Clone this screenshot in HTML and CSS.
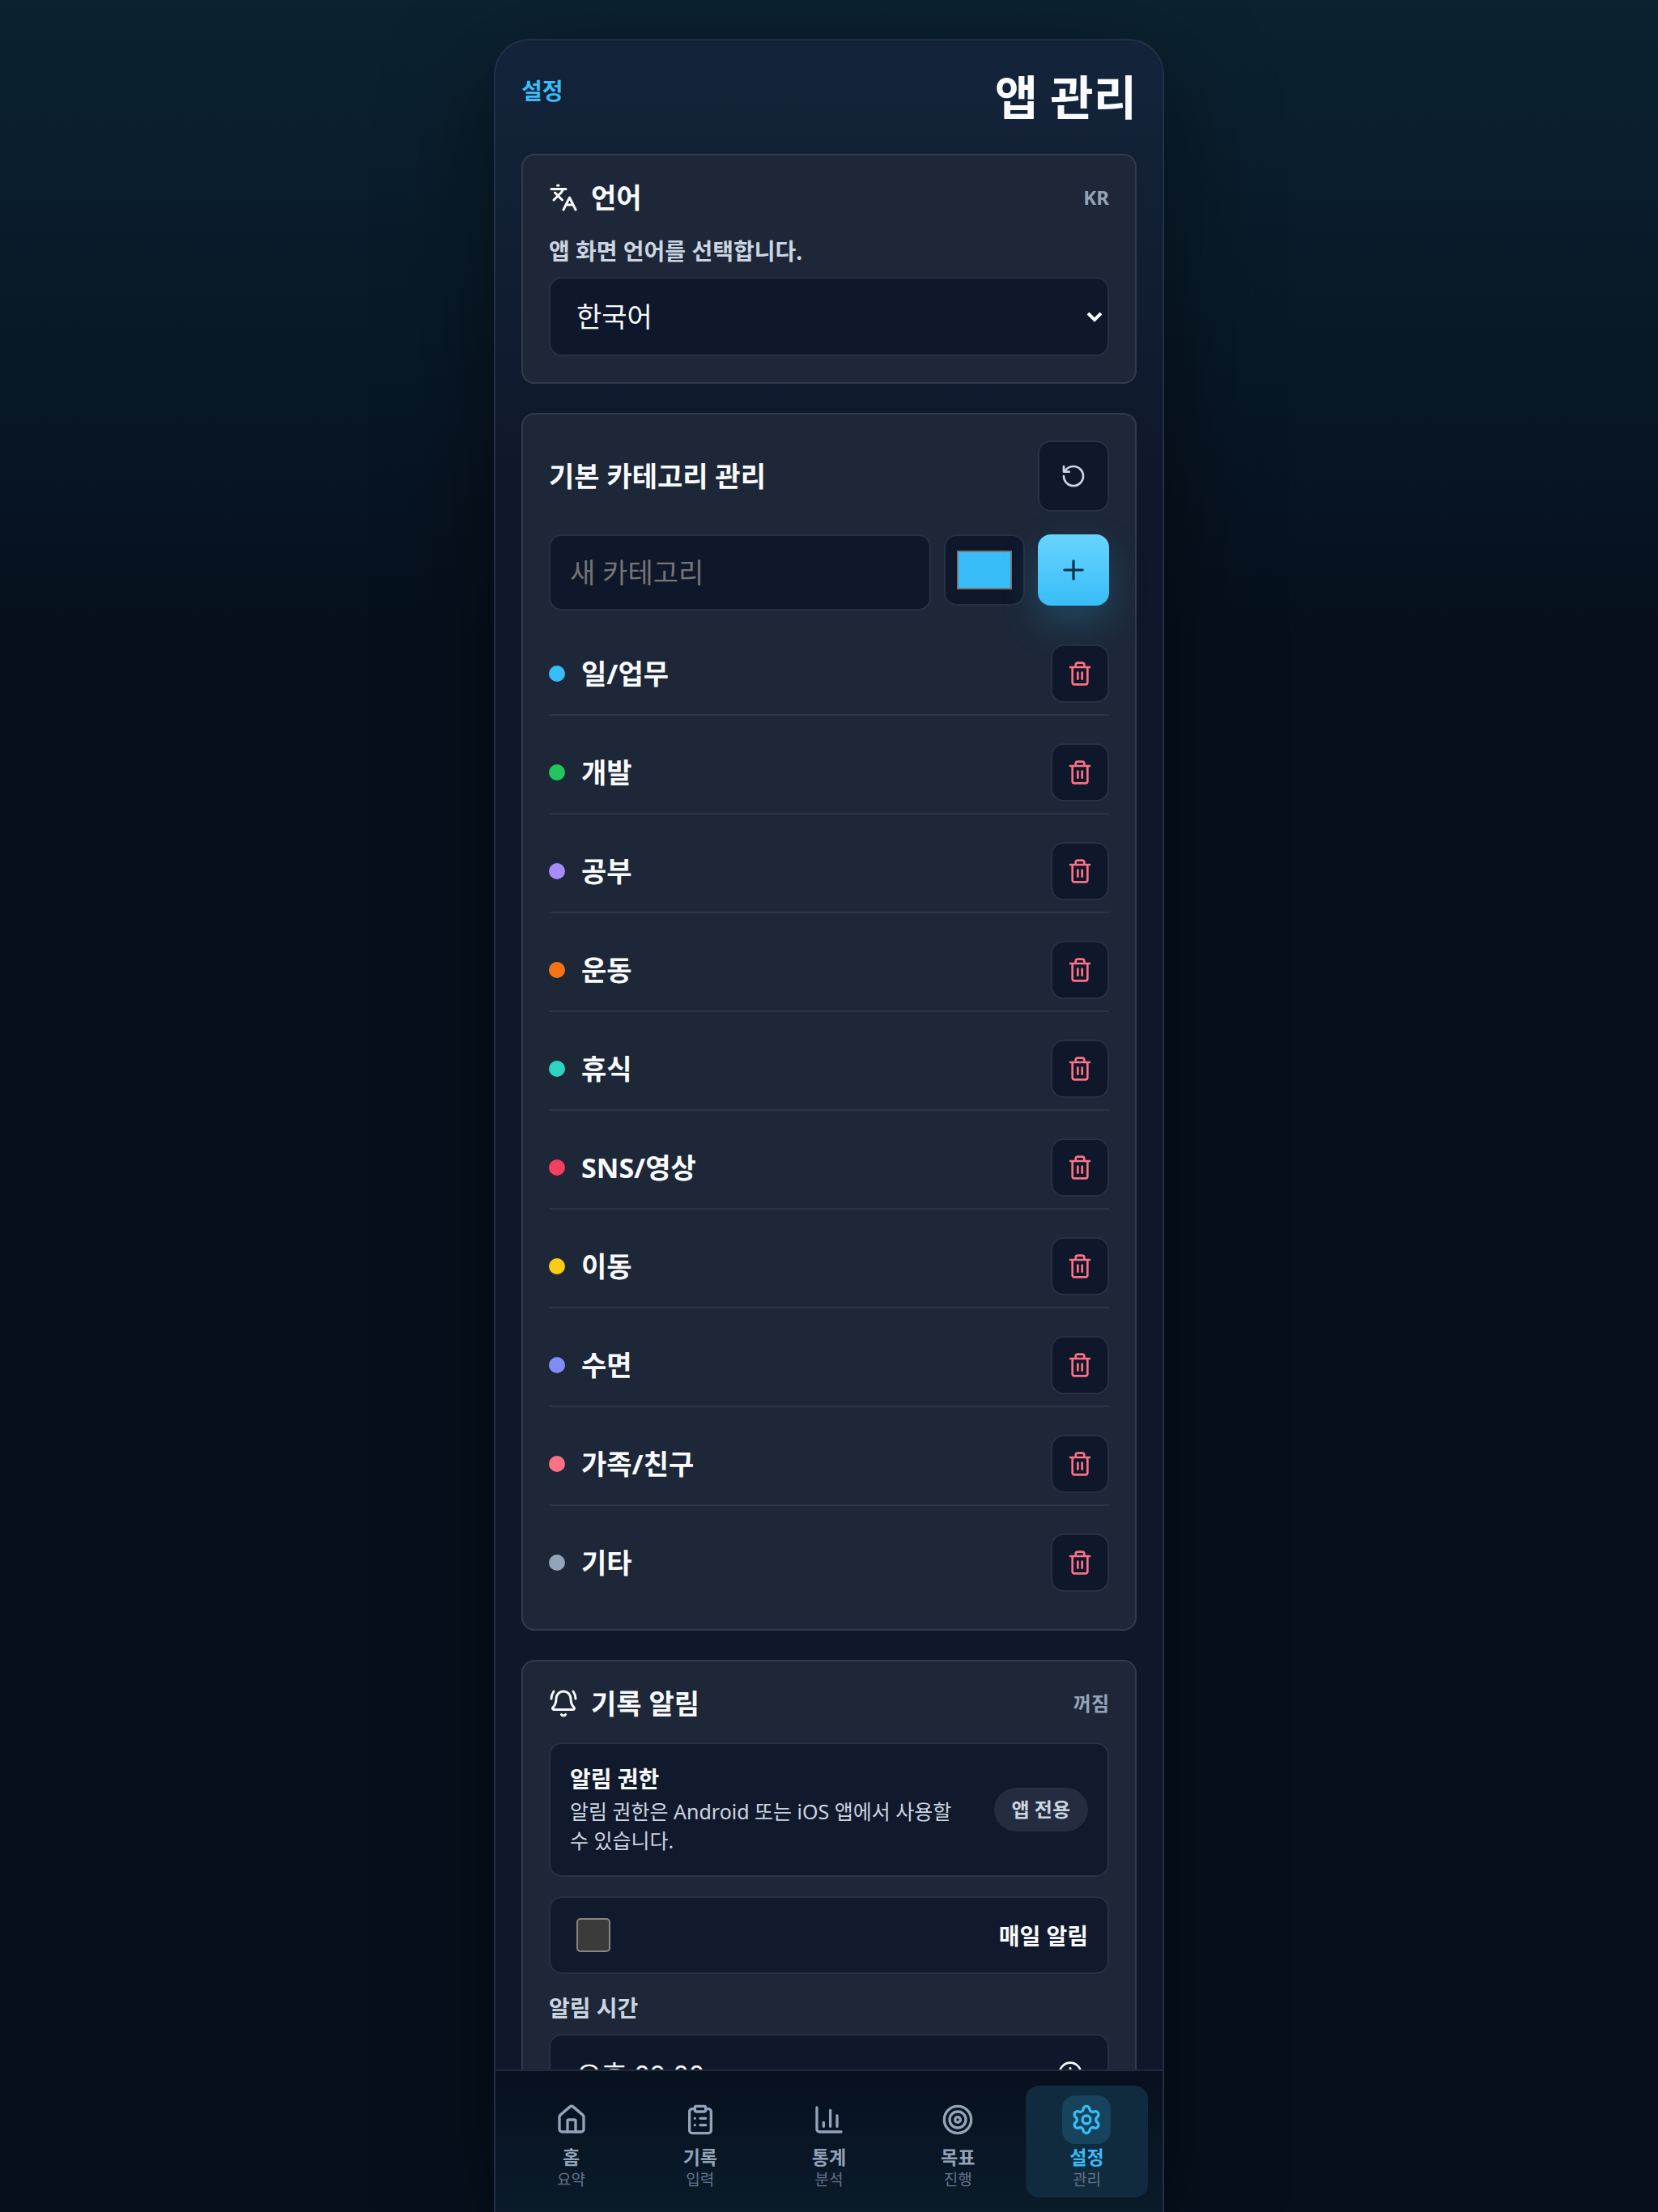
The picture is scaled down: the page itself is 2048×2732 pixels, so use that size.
FILE: index.html
```html
<!DOCTYPE html>
<html lang="ko">
<head>
    <meta charset="UTF-8">
    <meta name="viewport" content="width=device-width, initial-scale=1.0">
    <title>앱 관리</title>
    <link rel="stylesheet" href="styles.css">
</head>
<body>

<!-- Icons -->
<svg class="sprite" aria-hidden="true">
    <symbol id="languages" viewBox="0 0 24 24"><path d="m5 8 6 6M4 14l6-6 2-3M2 5h12M7 2h1M22 22l-5-10-5 10M14 18h6"/></symbol>
    <symbol id="bell" viewBox="0 0 24 24"><path d="M10.268 21a2 2 0 0 0 3.464 0M22 8c0-2.3-.8-4.3-2-6M3.262 15.326A1 1 0 0 0 4 17h16a1 1 0 0 0 .74-1.673C19.41 13.956 18 12.499 18 8A6 6 0 0 0 6 8c0 4.499-1.411 5.956-2.738 7.326M4 2C2.8 3.7 2 5.7 2 8"/></symbol>
    <symbol id="reset" viewBox="0 0 24 24"><path d="M3 12a9 9 0 1 0 9-9 9.75 9.75 0 0 0-6.74 2.74L3 8M3 3v5h5"/></symbol>
    <symbol id="plus" viewBox="0 0 24 24"><path d="M5 12h14M12 5v14"/></symbol>
    <symbol id="trash" viewBox="0 0 24 24"><path d="M3 6h18M19 6v14a2 2 0 0 1-2 2H7a2 2 0 0 1-2-2V6M8 6V4a2 2 0 0 1 2-2h4a2 2 0 0 1 2 2v2M10 11v6M14 11v6"/></symbol>
    <symbol id="clock" viewBox="0 0 24 24"><circle cx="12" cy="12" r="10"/><path d="M12 7v5l3 2"/></symbol>
    <symbol id="chevron" viewBox="0 0 24 24"><path d="m4 8 8 8 8-8"/></symbol>
    <symbol id="home" viewBox="0 0 24 24"><path d="M15 21v-8a1 1 0 0 0-1-1h-4a1 1 0 0 0-1 1v8"/><path d="M3 10a2 2 0 0 1 .709-1.528l7-6a2 2 0 0 1 2.582 0l7 6A2 2 0 0 1 21 10v9a2 2 0 0 1-2 2H5a2 2 0 0 1-2-2z"/></symbol>
    <symbol id="clipboard" viewBox="0 0 24 24"><rect width="8" height="4" x="8" y="2" rx="1"/><path d="M16 4h2a2 2 0 0 1 2 2v14a2 2 0 0 1-2 2H6a2 2 0 0 1-2-2V6a2 2 0 0 1 2-2h2M12 11h4M12 16h4M8 11h.01M8 16h.01"/></symbol>
    <symbol id="chart" viewBox="0 0 24 24"><path d="M3 3v16a2 2 0 0 0 2 2h16M18 17V9M13 17V5M8 17v-3"/></symbol>
    <symbol id="target" viewBox="0 0 24 24"><circle cx="12" cy="12" r="10"/><circle cx="12" cy="12" r="6"/><circle cx="12" cy="12" r="2"/></symbol>
    <symbol id="gear" viewBox="0 0 24 24"><path d="M9.671 4.136a2.34 2.34 0 0 1 4.659 0 2.34 2.34 0 0 0 3.319 1.915 2.34 2.34 0 0 1 2.33 4.033 2.34 2.34 0 0 0 0 3.831 2.34 2.34 0 0 1-2.33 4.033 2.34 2.34 0 0 0-3.319 1.915 2.34 2.34 0 0 1-4.659 0 2.34 2.34 0 0 0-3.32-1.915 2.34 2.34 0 0 1-2.33-4.033 2.34 2.34 0 0 0 0-3.831A2.34 2.34 0 0 1 6.35 6.051a2.34 2.34 0 0 0 3.319-1.915"/><circle cx="12" cy="12" r="3"/></symbol>
</svg>

<div class="app">
    <header class="app-header">
        <span class="eyebrow">설정</span>
        <h1>앱 관리</h1>
    </header>

    <main class="content">
        <!-- Language -->
        <section class="card">
            <div class="card-head">
                <h2><svg class="icon"><use href="#languages"/></svg>언어</h2>
                <span class="status">KR</span>
            </div>
            <label class="field-label" for="language">앱 화면 언어를 선택합니다.</label>
            <div class="select-wrap">
                <select id="language" class="field">
                    <option>한국어</option>
                    <option>English</option>
                </select>
                <svg class="chevron"><use href="#chevron"/></svg>
            </div>
        </section>

        <!-- Categories -->
        <section class="card">
            <div class="card-head tall">
                <h2>기본 카테고리 관리</h2>
                <button type="button" class="icon-button" aria-label="초기화"><svg><use href="#reset"/></svg></button>
            </div>
            <form class="category-form">
                <input type="text" class="field" placeholder="새 카테고리" aria-label="새 카테고리">
                <input type="color" class="color-field" value="#38bdf8" aria-label="색상">
                <button type="button" class="add-button" aria-label="추가"><svg><use href="#plus"/></svg></button>
            </form>
            <ul class="categories">
                <li><span class="dot work"></span><span class="name">일/업무</span><button type="button" class="delete-button" aria-label="일/업무 삭제"><svg><use href="#trash"/></svg></button></li>
                <li><span class="dot dev"></span><span class="name">개발</span><button type="button" class="delete-button" aria-label="개발 삭제"><svg><use href="#trash"/></svg></button></li>
                <li><span class="dot study"></span><span class="name">공부</span><button type="button" class="delete-button" aria-label="공부 삭제"><svg><use href="#trash"/></svg></button></li>
                <li><span class="dot sport"></span><span class="name">운동</span><button type="button" class="delete-button" aria-label="운동 삭제"><svg><use href="#trash"/></svg></button></li>
                <li><span class="dot rest"></span><span class="name">휴식</span><button type="button" class="delete-button" aria-label="휴식 삭제"><svg><use href="#trash"/></svg></button></li>
                <li><span class="dot sns"></span><span class="name">SNS/영상</span><button type="button" class="delete-button" aria-label="SNS/영상 삭제"><svg><use href="#trash"/></svg></button></li>
                <li><span class="dot move"></span><span class="name">이동</span><button type="button" class="delete-button" aria-label="이동 삭제"><svg><use href="#trash"/></svg></button></li>
                <li><span class="dot sleep"></span><span class="name">수면</span><button type="button" class="delete-button" aria-label="수면 삭제"><svg><use href="#trash"/></svg></button></li>
                <li><span class="dot family"></span><span class="name">가족/친구</span><button type="button" class="delete-button" aria-label="가족/친구 삭제"><svg><use href="#trash"/></svg></button></li>
                <li><span class="dot other"></span><span class="name">기타</span><button type="button" class="delete-button" aria-label="기타 삭제"><svg><use href="#trash"/></svg></button></li>
            </ul>
        </section>

        <!-- Reminders -->
        <section class="card">
            <div class="card-head">
                <h2><svg class="icon"><use href="#bell"/></svg>기록 알림</h2>
                <span class="status">꺼짐</span>
            </div>
            <div class="permission">
                <div class="permission-text">
                    <strong>알림 권한</strong>
                    <p>알림 권한은 Android 또는 iOS 앱에서 사용할 수 있습니다.</p>
                </div>
                <span class="pill">앱 전용</span>
            </div>
            <label class="toggle">
                <input type="checkbox">
                <span>매일 알림</span>
            </label>
            <label class="field-label" for="time">알림 시간</label>
            <div class="select-wrap">
                <input type="text" id="time" class="field" value="오후 09:00">
                <svg class="clock"><use href="#clock"/></svg>
            </div>
        </section>
    </main>

    <nav class="tabs">
        <a href="#home"><span class="tab-icon"><svg><use href="#home"/></svg></span><b>홈</b><small>요약</small></a>
        <a href="#record"><span class="tab-icon"><svg><use href="#clipboard"/></svg></span><b>기록</b><small>입력</small></a>
        <a href="#stats"><span class="tab-icon"><svg><use href="#chart"/></svg></span><b>통계</b><small>분석</small></a>
        <a href="#goals"><span class="tab-icon"><svg><use href="#target"/></svg></span><b>목표</b><small>진행</small></a>
        <a href="#settings" class="active"><span class="tab-icon"><svg><use href="#gear"/></svg></span><b>설정</b><small>관리</small></a>
    </nav>
</div>

</body>
</html>
```

FILE: styles.css
```css
* {
    box-sizing: border-box;
}
body {
    margin: 0;
    height: 100vh;
    padding-top: 48px;
    overflow: hidden;
    font-family: "Noto Sans", "Noto Sans CJK KR", sans-serif;
    color: #f8fafc;
    background: linear-gradient(180deg, #0b2231 0, #06101d 780px);
}
button, input, select {
    font: inherit;
    color: inherit;
}
svg {
    fill: none;
    stroke: currentColor;
    stroke-width: 2;
    stroke-linecap: round;
    stroke-linejoin: round;
}
.sprite {
    display: none;
}
.app {
    display: flex;
    flex-direction: column;
    max-width: 828px;
    height: 100%;
    margin: 0 auto;
    overflow: hidden;
    border: 2px solid #223046;
    border-bottom: none;
    border-radius: 44px 44px 0 0;
    background: linear-gradient(180deg, #13243a 0, #0f172a 560px);
    box-shadow: 0 40px 140px rgba(0, 0, 0, 0.45);
}
.app-header {
    display: flex;
    justify-content: space-between;
    align-items: flex-start;
    padding: 36px 32px;
}
.eyebrow {
    padding-top: 8px;
    font-size: 28px;
    line-height: 36px;
    font-weight: 700;
    color: #38bdf8;
}
h1 {
    margin: 0;
    font-size: 58px;
    line-height: 68px;
    font-weight: 700;
}
.content {
    flex: 1;
    min-height: 0;
    overflow: hidden;
    padding: 0 32px;
}
.card {
    margin-bottom: 36px;
    padding: 32px;
    border: 2px solid #303c4d;
    border-radius: 16px;
    background: #1d2738;
}
.card-head {
    display: flex;
    justify-content: space-between;
    align-items: center;
    height: 40px;
    margin-bottom: 28px;
}
.card-head.tall {
    height: 88px;
}
h2 {
    display: flex;
    align-items: center;
    gap: 16px;
    margin: 0;
    font-size: 34px;
    line-height: 40px;
    font-weight: 700;
}
.icon {
    width: 36px;
    height: 36px;
}
.status {
    font-size: 24px;
    line-height: 32px;
    font-weight: 700;
    color: #94a3b8;
}
.field-label {
    display: block;
    margin-bottom: 14px;
    font-size: 28px;
    line-height: 36px;
    font-weight: 700;
    color: #cbd5e1;
}
.field {
    width: 100%;
    height: 98px;
    padding: 0 32px;
    border: 2px solid #263143;
    border-radius: 16px;
    background: #0f172a;
    font-size: 34px;
    appearance: none;
}
.field::placeholder {
    color: #757575;
}
.select-wrap {
    display: grid;
    align-items: center;
}
.select-wrap > * {
    grid-area: 1 / 1;
}
.chevron {
    justify-self: end;
    width: 24px;
    height: 24px;
    margin-right: 6px;
    stroke-width: 4;
    stroke-linecap: butt;
    stroke-linejoin: miter;
    pointer-events: none;
}
.clock {
    justify-self: end;
    width: 32px;
    height: 32px;
    margin-right: 32px;
    pointer-events: none;
}

/* Categories */
.category-form {
    display: flex;
    align-items: flex-start;
    gap: 16px;
    margin-bottom: 28px;
}
.category-form .field {
    flex: 1;
    min-width: 0;
    height: 94px;
    padding: 0 24px;
}
.color-field {
    width: 100px;
    height: 88px;
    padding: 18px 14px;
    border: 2px solid #263143;
    border-radius: 16px;
    background: #0f172a;
}
.color-field::-webkit-color-swatch-wrapper {
    padding: 0;
}
.color-field::-webkit-color-swatch {
    border: 2px solid #777777;
    border-radius: 0;
}
.icon-button, .add-button, .delete-button {
    display: grid;
    place-items: center;
    flex: none;
    width: 88px;
    height: 88px;
    padding: 0;
    border: 2px solid #263143;
    border-radius: 16px;
    background: #0f172a;
    color: #cbd5e1;
}
.icon-button svg {
    width: 32px;
    height: 32px;
}
.add-button {
    border: none;
    background: linear-gradient(180deg, #67d4ff, #38bdf8);
    color: #082f49;
    box-shadow: 0 20px 48px rgba(56, 189, 248, 0.22);
}
.add-button svg {
    width: 38px;
    height: 38px;
}
.delete-button {
    width: 72px;
    height: 72px;
    color: #fb7185;
}
.delete-button svg {
    width: 32px;
    height: 32px;
}
.categories {
    display: flex;
    flex-direction: column;
    gap: 20px;
    margin: 0;
    padding: 0;
    list-style: none;
}
.categories li {
    display: flex;
    align-items: center;
    gap: 20px;
    padding: 14px 0;
    border-bottom: 2px solid #2a3546;
}
.categories li:last-child {
    border-bottom: none;
}
.name {
    flex: 1;
    font-size: 34px;
    line-height: 40px;
    font-weight: 700;
}
.dot {
    width: 20px;
    height: 20px;
    border-radius: 50%;
}
.work { background: #38bdf8; }
.dev { background: #22c55e; }
.study { background: #a78bfa; }
.sport { background: #f97316; }
.rest { background: #2dd4bf; }
.sns { background: #f43f5e; }
.move { background: #facc15; }
.sleep { background: #818cf8; }
.family { background: #fb7185; }
.other { background: #94a3b8; }

/* Reminders */
.permission, .toggle {
    display: flex;
    justify-content: space-between;
    align-items: center;
    margin-bottom: 24px;
    padding: 24px;
    border: 2px solid #263143;
    border-radius: 16px;
    background: #111a2c;
}
.permission {
    gap: 32px;
    height: 166px;
}
.permission strong {
    display: block;
    margin-bottom: 4px;
    font-size: 28px;
    line-height: 36px;
}
.permission p {
    margin: 0;
    font-size: 25px;
    line-height: 36px;
    color: #cbd5e1;
}
.pill {
    flex: none;
    padding: 10px 22px;
    border-radius: 28px;
    background: #242d40;
    font-size: 24px;
    line-height: 34px;
    font-weight: 700;
    color: #cbd5e1;
}
.toggle {
    height: 96px;
    font-size: 28px;
    font-weight: 700;
}
.toggle input {
    width: 42px;
    height: 42px;
    margin: 0 8px;
    appearance: none;
    border: 2px solid #858585;
    border-radius: 5px;
    background: #3b3b3b;
}

/* Bottom navigation */
.tabs {
    display: grid;
    grid-template-columns: repeat(5, 1fr);
    gap: 8px;
    padding: 18px;
    border-top: 2px solid #202a39;
    background: linear-gradient(180deg, #07101e, #0b1b2a);
}
.tabs a {
    display: flex;
    flex-direction: column;
    align-items: center;
    height: 138px;
    padding-top: 12px;
    border-radius: 16px;
    color: #94a3b8;
    text-decoration: none;
}
.tab-icon {
    display: grid;
    place-items: center;
    width: 60px;
    height: 60px;
    margin-bottom: 2px;
    border-radius: 16px;
}
.tab-icon svg {
    width: 40px;
    height: 40px;
}
.tabs b {
    font-size: 23px;
    line-height: 28px;
}
.tabs small {
    font-size: 19px;
    line-height: 28px;
    color: #64748b;
}
.tabs .active {
    background: #102a3e;
    color: #38bdf8;
}
.active .tab-icon {
    background: #17435d;
}
```
